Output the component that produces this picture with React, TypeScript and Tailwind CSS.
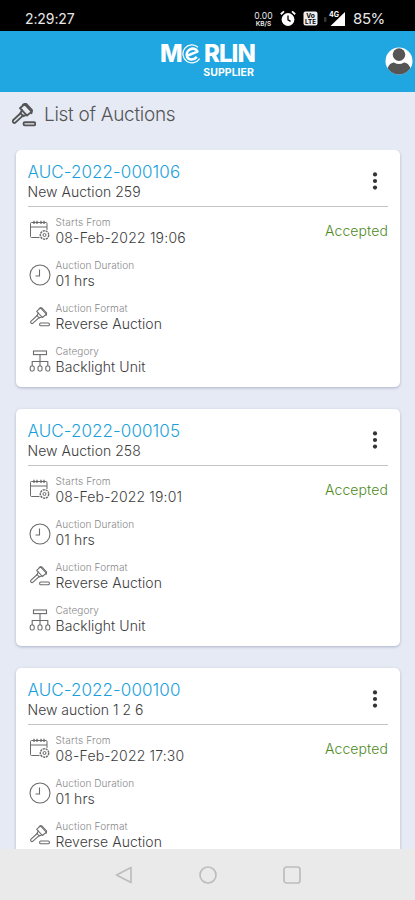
import React from "react";

type Auction = { id: string; name: string; starts: string; nameClass: string; startClass: string };

const auctions: Auction[] = [
  { id: "AUC-2022-000106", name: "New Auction 259", starts: "08-Feb-2022 19:06", nameClass: "tracking-[0.04px]", startClass: "tracking-[0.2px]" },
  { id: "AUC-2022-000105", name: "New Auction 258", starts: "08-Feb-2022 19:01", nameClass: "tracking-[0.04px]", startClass: "tracking-[0.15px]" },
  { id: "AUC-2022-000100", name: "New auction 1 2 6", starts: "08-Feb-2022 17:30", nameClass: "tracking-[0px]", startClass: "tracking-[0.17px]" },
];

function Gavel({ className, sw }: { className: string; sw: number }) {
  return (
    <svg className={className} viewBox="0 0 24 24" fill="none" stroke="currentColor" strokeWidth={sw} strokeLinejoin="round" strokeLinecap="round">
      <path d="M8 5.2 12.6 1 19.6 8.6 15 12.6Z" />
      <path d="M11 1.6 14.2.9 20 7.2 19.4 10.2" />
      <path d="M10 7.2 8.4 10.2l2.8 3 3.2-1.4" />
      <path d="M8.6 10.2 1.3 17a1.6 1.6 0 0 0 2.3 2.4l7.6-7" />
      <rect x="11.6" y="19.2" width="11.6" height="3.2" rx="1.2" />
    </svg>
  );
}

function Calendar() {
  return (
    <svg className="-mt-px -ml-px h-[22px] w-[22px]" viewBox="0 0 22 22" fill="none" stroke="currentColor" strokeWidth="1">
      <path d="M10.5 18.5H2.5Q1.5 18.5 1.5 17.5V4.5Q1.5 3.5 2.5 3.5H17Q18 3.5 18 4.5V11M1.5 8H18" />
      <path d="M5 1.8V5M8 1.8V5M12 1.8V5M15 1.8V5" strokeWidth="1.3" />
      <circle cx="15.5" cy="16" r="4.2" strokeDasharray="2.2 .7" strokeWidth="1.4" />
      <circle cx="15.5" cy="16" r="1.5" />
    </svg>
  );
}

function Clock() {
  return (
    <svg className="mt-px -ml-px h-[22px] w-[22px]" viewBox="0 0 22 22" fill="none" stroke="currentColor" strokeWidth="1.1">
      <circle cx="11" cy="11" r="10" />
      <path d="M10.5 5.5V12H6.5" />
    </svg>
  );
}

function Tree() {
  return (
    <svg className="mt-px -ml-px h-[22px] w-[22px]" viewBox="0 0 22 22" fill="none" stroke="currentColor" strokeWidth="1.1">
      <rect x="4.5" y="1" width="13" height="3.6" />
      <path d="M11 4.6V16M3.2 16V11.5H18.8V16" />
      <rect x="1.2" y="16" width="4" height="5" rx="1.4" />
      <rect x="9" y="16" width="4" height="5" rx="1.4" />
      <rect x="16.8" y="16" width="4" height="5" rx="1.4" />
    </svg>
  );
}

function Field({ icon, label, value, labelClass, valueClass, children }: { icon: React.ReactNode; label: string; value: string; labelClass: string; valueClass: string; children?: React.ReactNode }) {
  return (
    <div className="flex h-[43px] items-start whitespace-nowrap">
      <div className="flex w-[27.5px] shrink-0 pt-[5px] pl-[2px] text-[#6b6b6b]">{icon}</div>
      <div className="grow">
        <div className={`text-[10px] leading-[14px] font-light text-[#888] ${labelClass}`}>{label}</div>
        <div className={`text-[14px] leading-[18px] font-light text-[#3c3c3c] ${valueClass}`}>{value}</div>
      </div>
      {children}
    </div>
  );
}

function Card({ a }: { a: Auction }) {
  return (
    <article className="h-[237px] shrink-0 rounded-[5px] bg-white px-3 shadow-[0_1px_3px_rgba(70,80,110,0.35)]">
      <div className="flex h-[57px] items-start justify-between border-b border-[#c4c4c4] pt-3 whitespace-nowrap">
        <div className="-ml-[0.5px]">
          <div className="text-[17px] leading-5 font-[350] tracking-[0.08px] text-[#199fdb]">{a.id}</div>
          <div className={`text-[14px] leading-5 font-light text-[#3c3c3c] ${a.nameClass}`}>{a.name}</div>
        </div>
        <svg className="mt-[9px] mr-[10px] h-5 w-[6px]" viewBox="0 0 6 20" fill="#333">
          <circle cx="3" cy="3.4" r="2.1" />
          <circle cx="3" cy="10" r="2.1" />
          <circle cx="3" cy="16.6" r="2.1" />
        </svg>
      </div>
      <div className="pt-[8px]">
        <Field icon={<Calendar />} label="Starts From" value={a.starts} labelClass="tracking-[0.2px]" valueClass={a.startClass}>
          <span className="pt-[6px] text-[14px] leading-5 font-light tracking-[0.1px] text-[#4d8a1d]">Accepted</span>
        </Field>
        <Field icon={<Clock />} label="Auction Duration" value="01 hrs" labelClass="tracking-[0.08px]" valueClass="tracking-[0.15px]" />
        <Field icon={<Gavel className="mt-px h-5 w-5" sw={1.3} />} label="Auction Format" value="Reverse Auction" labelClass="tracking-[0.12px]" valueClass="tracking-[0.03px]" />
        <Field icon={<Tree />} label="Category" value="Backlight Unit" labelClass="tracking-[0.08px]" valueClass="tracking-[0.05px]" />
      </div>
    </article>
  );
}

function StatusBar() {
  return (
    <div className="flex h-[31px] shrink-0 items-center bg-black pt-[6px] pr-[31px] pl-[25px] text-[#e8e8e8]">
      <span className="grow text-[14px] leading-5 tracking-[-0.1px]">2:29:27</span>
      <svg className="h-[18px] w-[19px]" viewBox="0 0 19 18" fill="#e8e8e8" fontFamily="Inter, sans-serif" textAnchor="middle">
        <text x="9.5" y="8.6" fontSize="8.6">0.00</text>
        <text x="9.5" y="15.6" fontSize="6.5" fontWeight="600">KB/S</text>
      </svg>
      <svg className="ml-[7px] h-[17px] w-4" viewBox="0 0 16 17" fill="#fff">
        <circle cx="8" cy="9.5" r="6.4" />
        <path d="M.8 4.2 4 1.4M15.2 4.2 12 1.4" stroke="#fff" strokeWidth="1.8" />
        <path d="M8 5.6v4.2l2.6 1.6" fill="none" stroke="#000" strokeWidth="1.3" />
      </svg>
      <svg className="ml-[7px] h-[15px] w-[15px]" viewBox="0 0 15 15" fontFamily="Inter, sans-serif" fontWeight="700" textAnchor="middle">
        <rect x="0.5" y="0.5" width="14" height="14" rx="2" fill="#eee" />
        <text x="7.5" y="7" fontSize="6.6">Vo</text>
        <text x="7.5" y="13.2" fontSize="6.2">LTE</text>
      </svg>
      <svg className="ml-[6px] h-4 w-[22px]" viewBox="0 0 22 16" fill="#fff">
        <path d="M21 1V15H6.5Z" />
        <rect x="0" y="6" width="2.5" height="5" rx="1" fill="#333" />
        <text x="5" y="6.4" fontSize="7" fontWeight="700" fontFamily="Inter, sans-serif">4G</text>
      </svg>
      <span className="ml-[7px] w-[31px] text-[15px] leading-5 tracking-[-0.4px]">85%</span>
    </div>
  );
}

function Header() {
  return (
    <header className="grid h-[61px] shrink-0 grid-cols-[1fr_95px_1fr] bg-[#20a6e0] text-white">
      <span />
      <div className="flex flex-col items-end pt-[11px]">
        <div className="-ml-px flex w-[95px] items-center justify-between text-[24px] leading-6 font-extrabold">
          <span className="tracking-[-0.8px]">M</span>
          <svg className="-mr-[2px] -ml-[3px] h-5 w-5" viewBox="0 0 20 20" fill="none" stroke="#fff">
            <path d="M16 3.2A9 9 0 1 0 17.6 14.6" strokeWidth="1.2" />
            <path d="M5.2 11.8 15.4 7.6C14.2 4.6 10.8 3.8 8 5.4 5 7.2 4 10.4 5.2 12.9 6.8 16.2 11.6 16.6 14.8 12.8" strokeWidth="2.6" strokeLinejoin="round" />
          </svg>
          <span className="tracking-[-0.9px]">RLIN</span>
        </div>
        <div className="mr-px text-[10.5px] leading-[13px] font-bold tracking-[0.05px]">SUPPLIER</div>
      </div>
      <div className="flex justify-end pt-4 pr-[2px]">
        <svg className="h-7 w-7" viewBox="0 0 28 28">
          <defs>
            <clipPath id="avatar"><circle cx="14" cy="14" r="13.5" /></clipPath>
          </defs>
          <circle cx="14" cy="14" r="13.5" fill="#fff" />
          <g clipPath="url(#avatar)" fill="#555">
            <circle cx="14" cy="7.6" r="6.3" />
            <path d="M2 28C1 19 6 15.4 9 15.4Q14 18.6 19 15.4C22 15.4 27 19 26 28Z" />
          </g>
        </svg>
      </div>
    </header>
  );
}

export default function App() {
  return (
    <div className="flex h-[900px] w-[415px] flex-col overflow-hidden bg-[#e6eaf5] font-[Inter,'Liberation_Sans',sans-serif]">
      <StatusBar />
      <Header />
      <div className="flex h-[58px] shrink-0 items-start pt-[11px] pl-3 text-[#555]">
        <Gavel className="h-6 w-6" sw={1.9} />
        <h1 className="ml-2 text-[19px] leading-6 font-light tracking-[-0.3px] whitespace-nowrap">List of Auctions</h1>
      </div>
      <main className="flex min-h-0 grow flex-col gap-[22px] overflow-hidden pr-[15px] pl-4">
        {auctions.map((a) => (
          <Card key={a.id} a={a} />
        ))}
      </main>
      <nav className="flex h-[51px] shrink-0 items-center justify-center gap-[66px] bg-[#eaeaea] text-[#bdbdbd]">
        <svg className="h-[18px] w-[18px]" viewBox="0 0 18 18" fill="none" stroke="currentColor" strokeWidth="1.7" strokeLinejoin="round">
          <path d="M1.5 9 16 1.5V16.5Z" />
        </svg>
        <svg className="h-[18px] w-[18px]" viewBox="0 0 18 18" fill="none" stroke="currentColor" strokeWidth="1.7">
          <circle cx="9" cy="9" r="8" />
        </svg>
        <svg className="h-[18px] w-[18px]" viewBox="0 0 18 18" fill="none" stroke="currentColor" strokeWidth="1.7">
          <rect x="1" y="1" width="16" height="16" rx="2.5" />
        </svg>
      </nav>
    </div>
  );
}
